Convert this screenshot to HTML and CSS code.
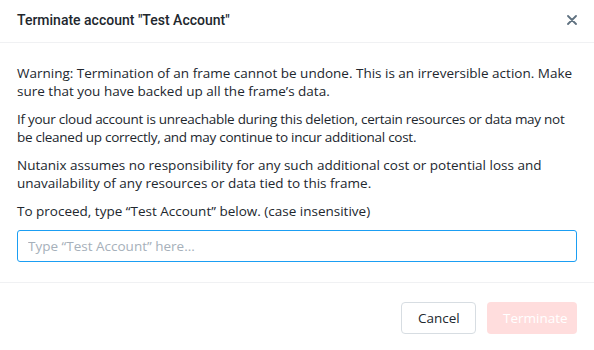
FILE: index.html
```html
<!DOCTYPE html>
<html lang="en">
<head>
  <meta charset="UTF-8">
  <title>Terminate account</title>
  <link rel="stylesheet" href="styles.css">
</head>
<body>
  <div class="modal">
    <header class="modal-head">
      <h1>Terminate account "Test Account"</h1>
      <button class="close" aria-label="Close">
        <svg width="10" height="10" viewBox="0 0 10 10"><path d="M1 1L9 9M9 1L1 9" stroke="#5f7180" stroke-width="1.8" stroke-linecap="round"/></svg>
      </button>
    </header>
    <main class="modal-body">
      <p>Warning: Termination of an frame cannot be undone. This is an irreversible action. Make sure that you have backed up all the frame’s data.</p>
      <p class="tight">If your cloud account is unreachable during this deletion, certain resources or data may not be cleaned up correctly, and may continue to incur additional cost.</p>
      <p>Nutanix assumes no responsibility for any such additional cost or potential loss and unavailability of any resources or data tied to this frame.</p>
      <p>To proceed, type “Test Account” below. (case insensitive)</p>
      <input type="text" class="confirm" placeholder="Type “Test Account” here...">
    </main>
    <footer class="modal-foot">
      <button class="btn btn-cancel">Cancel</button>
      <button class="btn btn-danger" disabled>Terminate</button>
    </footer>
  </div>
</body>
</html>
```

FILE: styles.css
```css
body {
  margin: 0;
  background: #fff;
  font-family: 'Open Sans', sans-serif;
  color: #22272e;
}
.modal {
  width: 594px;
  height: 350px;
  display: flex;
  flex-direction: column;
}
.modal-head {
  height: 43px;
  box-sizing: border-box;
  border-bottom: 1px solid #f0f1f3;
  display: flex;
  align-items: center;
  justify-content: space-between;
  padding: 0 16px 0 17px;
}
.modal-head h1 {
  margin: -2px 0 0;
  font-family: 'Roboto', sans-serif;
  font-size: 14px;
  font-weight: 500;
  color: #22272e;
}
.close {
  border: none;
  background: none;
  padding: 0;
  width: 12px;
  height: 12px;
  margin-top: -2px;
  display: flex;
  align-items: center;
  justify-content: center;
}
.modal-body {
  padding: 21px 17px 20px;
  border-bottom: 1px solid #f0f1f3;
}
.modal-body p {
  margin: 0 0 10px;
  font-size: 13.5px;
  line-height: 18px;
}
.modal-body p.tight {
  letter-spacing: -0.28px;
}
.confirm {
  display: block;
  width: 100%;
  box-sizing: border-box;
  height: 32px;
  margin-top: 9px;
  padding: 0 10px;
  border: 1px solid #1b9ef3;
  border-radius: 3px;
  font-family: inherit;
  font-size: 13.5px;
  outline: none;
}
.confirm::placeholder {
  color: #a6b0ba;
}
.modal-foot {
  flex: 1;
  display: flex;
  justify-content: flex-end;
  align-items: center;
  gap: 11px;
  padding: 2px 17px 0;
}
.btn {
  height: 32px;
  border-radius: 4px;
  font-family: inherit;
  font-size: 13.5px;
  padding: 0 16px;
}
.btn-cancel {
  background: #fff;
  border: 1px solid #d7dde2;
  color: #22272e;
  width: 75px;
}
.btn-danger {
  background: #ffdddd;
  border: none;
  color: #fff;
  width: 90px;
}
```
